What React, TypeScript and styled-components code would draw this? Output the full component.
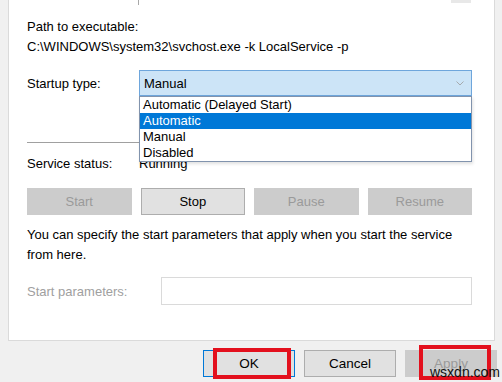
import React from 'react';
import styled, { createGlobalStyle } from 'styled-components';

const GlobalStyle = createGlobalStyle`
  html, body {
    margin: 0;
    padding: 0;
    background: #f0f0f0;
  }
  body {
    font-family: 'Liberation Sans', Arial, sans-serif;
    font-size: 13px;
    color: #000;
  }
`;

const startupOptions = ['Automatic (Delayed Start)', 'Automatic', 'Manual', 'Disabled'];
const SELECTED = 'Automatic';

export default function App() {
  return (
    <>
      <GlobalStyle />
      <Dialog>
        <Panel>
          <DescBox>
            <ScrollThumb />
          </DescBox>

          <Block>
            <Line>Path to executable:</Line>
            <Line>C:\WINDOWS\system32\svchost.exe -k LocalService -p</Line>
          </Block>

          <StartupRow>
            <Label>Startup type:</Label>
            <ComboWrap>
              <Combo>
                <span>Manual</span>
                <svg width="8" height="5" viewBox="0 0 8 5">
                  <polyline points="0.5,0.5 4,4 7.5,0.5" fill="none" stroke="#9a9a9a" strokeWidth="0.8" />
                </svg>
              </Combo>
              <DropList>
                {startupOptions.map((opt) => (
                  <Option key={opt} selected={opt === SELECTED}>
                    {opt}
                  </Option>
                ))}
              </DropList>
            </ComboWrap>
          </StartupRow>

          <Separator />

          <StatusRow>
            <Label>Service status:</Label>
            <span>Running</span>
          </StatusRow>

          <ButtonGrid>
            <ServiceButton disabled>Start</ServiceButton>
            <ServiceButton>Stop</ServiceButton>
            <ServiceButton disabled>Pause</ServiceButton>
            <ServiceButton disabled>Resume</ServiceButton>
          </ButtonGrid>

          <Paragraph>
            You can specify the start parameters that apply when you start the service
            <br />
            from here.
          </Paragraph>

          <ParamsRow>
            <DimLabel>Start parameters:</DimLabel>
            <ParamsInput />
          </ParamsRow>
        </Panel>

        <Footer>
          <DialogButton primary>OK</DialogButton>
          <DialogButton>Cancel</DialogButton>
          <DialogButton disabled>Apply</DialogButton>
          <Highlight style={{ left: 213, top: 7, width: 78, height: 31 }} />
          <Highlight style={{ left: 419, top: 4, width: 72, height: 35 }} />
          <Watermark>wsxdn.com</Watermark>
        </Footer>
      </Dialog>
    </>
  );
}

const Dialog = styled.div`
  width: 502px;
  height: 382px;
  overflow: hidden;
  display: flex;
  flex-direction: column;
  background: #f0f0f0;
`;

const Panel = styled.div`
  box-sizing: border-box;
  height: 341px;
  flex-shrink: 0;
  margin-left: 8px;
  width: 487px;
  background: #fff;
  border: 1px solid #dadada;
  border-top: none;
  padding: 0 22px 0 18px;
  display: flex;
  flex-direction: column;
`;

const DescBox = styled.div`
  height: 5px;
  margin-left: 111px;
  border-left: 1px solid #a8a8a8;
  display: flex;
  justify-content: flex-end;
  padding-right: 1px;
`;

const ScrollThumb = styled.div`
  width: 20px;
  height: 3px;
  background: #e8e8e8;
`;

const Block = styled.div`
  margin-top: 12px;
`;

const Line = styled.div`
  line-height: 20px;
  white-space: nowrap;
`;

const Label = styled.div`
  width: 112px;
  flex-shrink: 0;
`;

const DimLabel = styled(Label)`
  width: 134px;
  color: #a0a0a0;
`;

const StartupRow = styled.div`
  margin-top: 13px;
  display: flex;
  align-items: center;
  height: 26px;
  position: relative;
  z-index: 2;
`;

const ComboWrap = styled.div`
  position: relative;
  flex: 1;
  height: 26px;
`;

const Combo = styled.div`
  box-sizing: border-box;
  height: 26px;
  background: #cce4f7;
  border: 1px solid #6ea6dc;
  display: flex;
  align-items: center;
  justify-content: space-between;
  padding: 1px 7px 0 4px;
`;

const DropList = styled.div`
  position: absolute;
  top: 100%;
  left: 0;
  right: 0;
  box-sizing: border-box;
  background: #fff;
  border: 1px solid #8193ad;
  box-shadow: 1px 2px 3px rgba(0, 0, 0, 0.12);
`;

const Option = styled.div<{ selected?: boolean }>`
  height: 16px;
  line-height: 16px;
  padding-left: 3px;
  white-space: nowrap;
  background: ${(p) => (p.selected ? '#0078d7' : 'transparent')};
  color: ${(p) => (p.selected ? '#fff' : '#000')};
`;

const Separator = styled.div`
  margin-top: 46px;
  height: 1px;
  background: #a0a0a0;
`;

const StatusRow = styled.div`
  margin-top: 11px;
  display: flex;
  line-height: 20px;
`;

const ButtonGrid = styled.div`
  margin-top: 14px;
  display: grid;
  grid-template-columns: repeat(4, 1fr);
  column-gap: 9px;
`;

const ServiceButton = styled.button`
  box-sizing: border-box;
  height: 27px;
  margin: 0;
  font: inherit;
  color: #000;
  background: #e1e1e1;
  border: 1px solid #adadad;

  &:disabled {
    background: #cccccc;
    border-color: #cccccc;
    color: #9a9a9a;
  }
`;

const Paragraph = styled.p`
  margin: 10px 0 0;
  line-height: 20px;
  white-space: nowrap;
`;

const ParamsRow = styled.div`
  margin-top: 12px;
  display: flex;
  align-items: center;
  height: 28px;
`;

const ParamsInput = styled.div`
  flex: 1;
  box-sizing: border-box;
  height: 28px;
  border: 1px solid #dadada;
`;

const Footer = styled.div`
  position: relative;
  flex: 1;
  display: flex;
  justify-content: flex-end;
  align-items: flex-start;
  gap: 9px;
  padding: 9px 5px 0 0;
`;

const DialogButton = styled.button<{ primary?: boolean }>`
  box-sizing: border-box;
  width: 92px;
  height: 27px;
  margin: 0;
  font: inherit;
  font-size: 13.5px;
  color: #000;
  background: #e1e1e1;
  border: 1px solid ${(p) => (p.primary ? '#0078d7' : '#adadad')};

  &:disabled {
    background: #cccccc;
    border-color: #cccccc;
    color: #9a9a9a;
  }
`;

const Highlight = styled.div`
  position: absolute;
  box-sizing: border-box;
  border: 4px solid #e3101d;
  pointer-events: none;
`;

const Watermark = styled.div`
  position: absolute;
  left: 430px;
  top: 23px;
  font-size: 14px;
  line-height: 16px;
  color: #111;
  pointer-events: none;
`;
